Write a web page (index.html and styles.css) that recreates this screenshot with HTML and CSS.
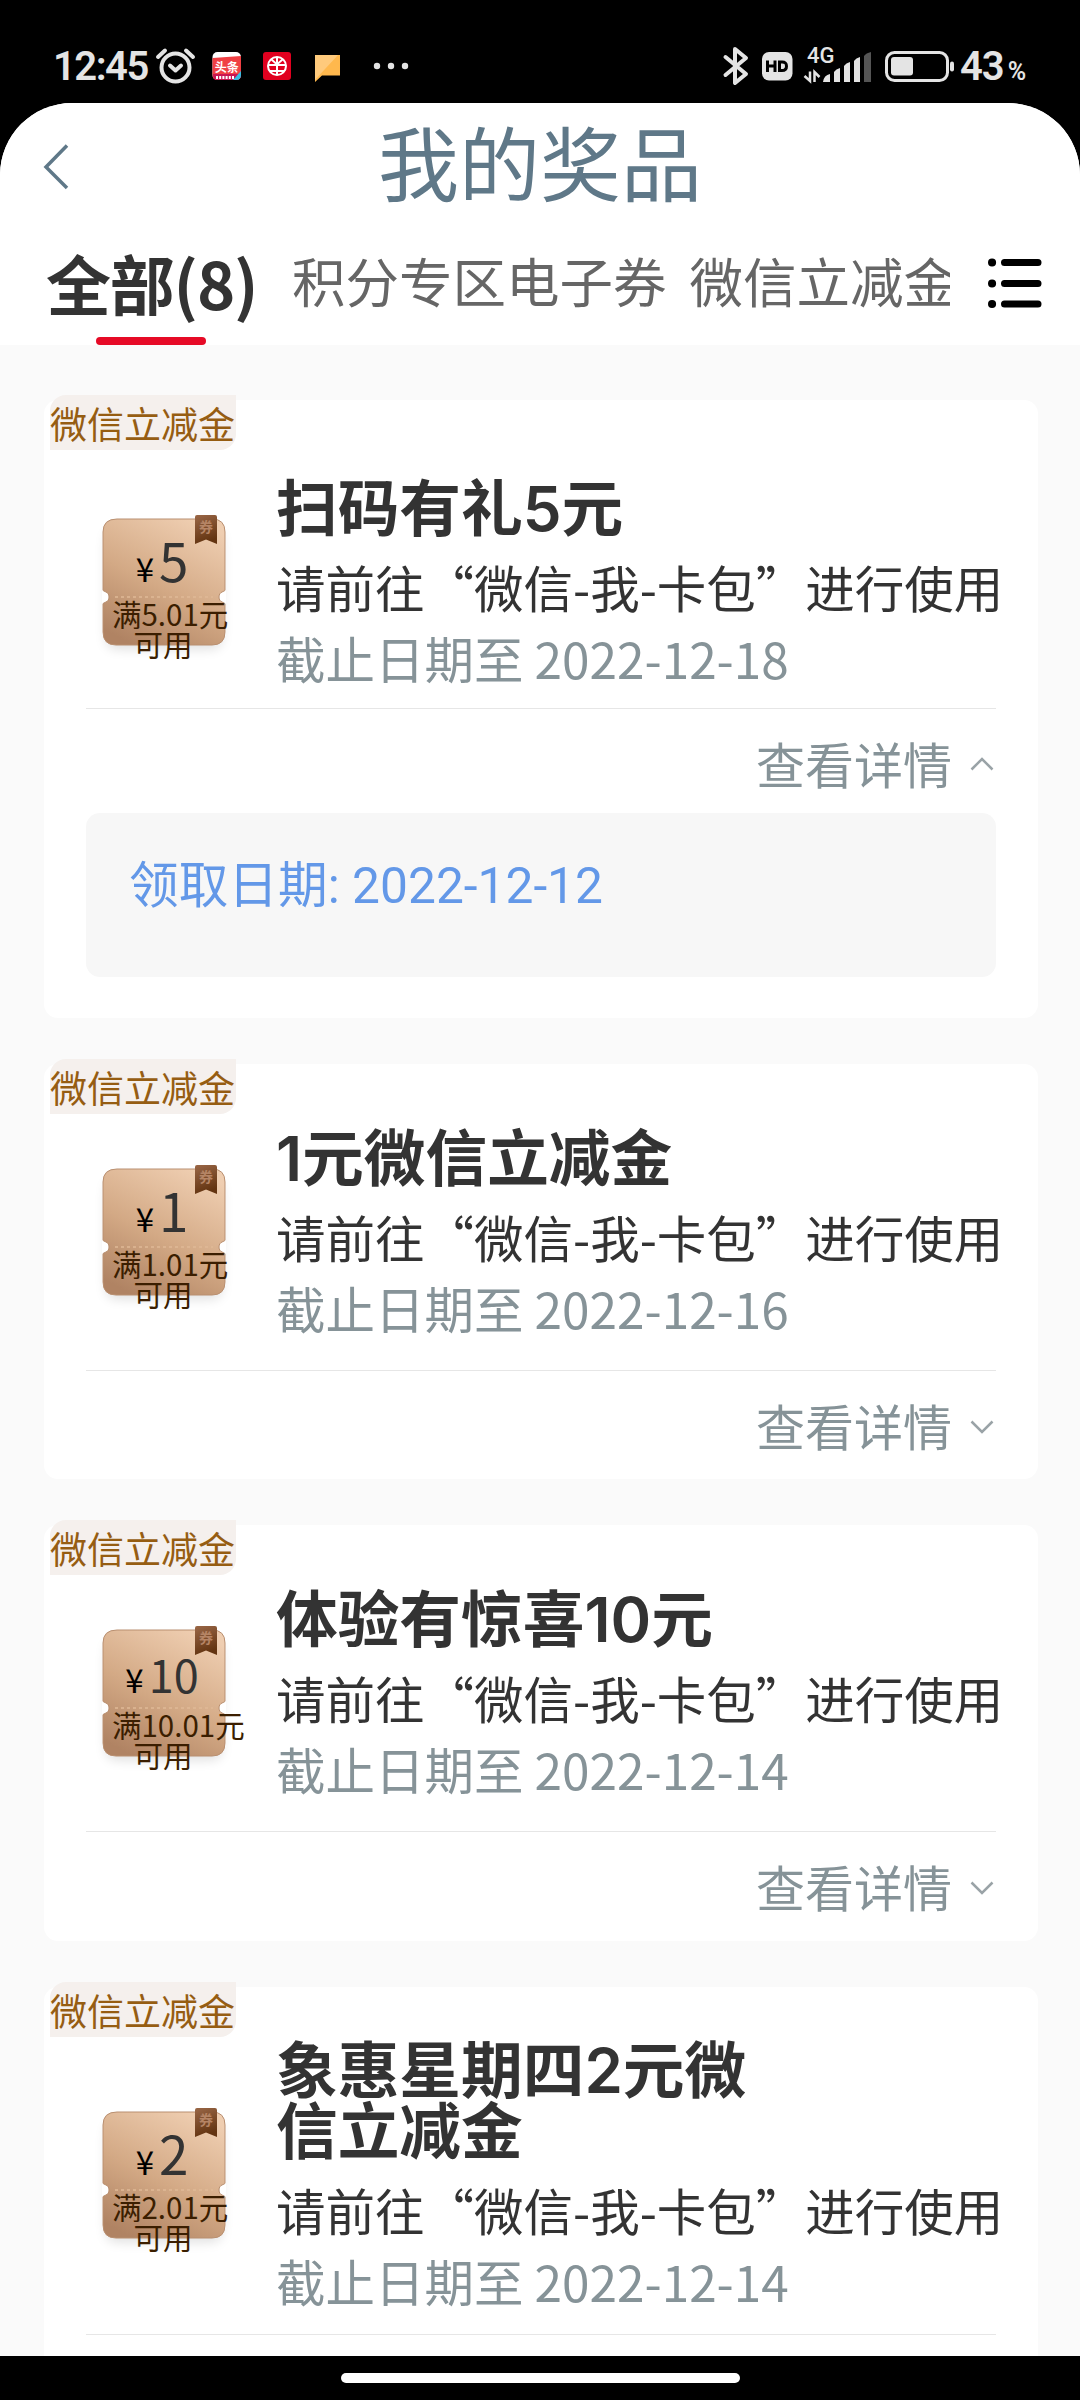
FILE: index.html
```
<!DOCTYPE html>
<html lang="zh-CN">
<head>
<meta charset="utf-8">
<title>我的奖品</title>
<link rel="stylesheet" href="styles.css">
</head>
<body>
<svg class="defs" width="0" height="0">
  <defs>
    <linearGradient id="paper" x1="0.75" y1="0" x2="0.25" y2="1">
      <stop offset="0" stop-color="#efceb1"/><stop offset="0.55" stop-color="#d3a985"/><stop offset="1" stop-color="#b08363"/>
    </linearGradient>
    <linearGradient id="ribbon" x1="0" y1="0" x2="0.3" y2="1">
      <stop offset="0" stop-color="#9a6747"/><stop offset="1" stop-color="#633411"/>
    </linearGradient>
    <symbol id="ticket" viewBox="0 0 140 160">
      <path d="M16 11H111Q124 11 124 24V82C124 84 118 83 118 89S124 94 124 96V124Q124 137 111 137H15Q2 137 2 124V96C2 94 8 95 8 89S2 84 2 82V24Q2 11 16 11Z" fill="url(#paper)" stroke="#b98f70" stroke-width="1"/>
      <path d="M14 89H112" stroke="#dfb997" stroke-width="1.500" stroke-dasharray="3 3"/>
      <path d="M94 9Q94 7 96 7H114Q116 7 116 9V36L105 31.500L94 36Z" fill="url(#ribbon)"/>
      <text x="105" y="24" font-size="14" font-weight="700" text-anchor="middle" fill="#b58465">券</text>
    </symbol>
  </defs>
</svg>
<div class="phone">
  <header class="status">
    <span class="time">12:45</span>
    <svg viewBox="152 0 52 103" width="52" height="103" fill="none" stroke="#e4e4e4" stroke-width="4" stroke-linecap="round" stroke-linejoin="round">
      <circle cx="175.500" cy="67.500" r="14"/><path d="M170 65.500L175.500 70.500L181 65.500M158 57L165 50.500M193 57L186 50.500"/>
    </svg>
    <svg viewBox="204 0 50 103" width="50" height="103">
      <rect x="212.500" y="52" width="28.500" height="28" rx="5" fill="#fff"/>
      <path d="M212.500 58L241 56V75Q241 80 236 80H217.500Q212.500 80 212.500 75Z" fill="#f04044"/>
      <path d="M213 74H241V75Q241 80 236 80H217Q213 80 213 74Z" fill="#c91552"/>
      <path d="M241 71V75Q241 80 236 80H233Z" fill="#35bde0"/>
      <text x="226.800" y="72" font-size="12" font-weight="700" text-anchor="middle" fill="#fff">头条</text>
      <path d="M216 77.500H235" stroke="#fff" stroke-width="3" stroke-dasharray="2 1.200"/>
    </svg>
    <svg viewBox="254 0 50 103" width="50" height="103" fill="none" stroke="#fff" stroke-width="2">
      <rect x="263" y="52" width="28" height="28" rx="3" fill="#e1001f" stroke="none"/>
      <circle cx="277" cy="66" r="9"/><path d="M271 59L277 64.500L283 59M268 65H286M270 71H284M277 58V75"/>
    </svg>
    <svg viewBox="304 0 56 103" width="56" height="103">
      <path d="M315 55H340V75.500H322L315 82Z" fill="#ffb84d"/><path d="M315 55H338L319 75.500L315 80Z" fill="#ffca7c"/>
    </svg>
    <svg viewBox="360 0 60 103" width="60" height="103" fill="#e4e4e4">
      <circle cx="377" cy="66" r="3.200"/><circle cx="391" cy="66" r="3.200"/><circle cx="405" cy="66" r="3.200"/>
    </svg>
    <span class="spacer"></span>
    <svg viewBox="716 0 40 103" width="40" height="103" fill="none" stroke="#e4e4e4" stroke-width="4" stroke-linecap="round" stroke-linejoin="round">
      <path d="M725.500 57L746 74L735 83V49L746 58L725.500 75"/>
    </svg>
    <svg viewBox="756 0 44 103" width="44" height="103">
      <rect x="762" y="52" width="30.500" height="28.500" rx="7" fill="#e4e4e4"/>
      <path d="M767.500 60.500V72M775 60.500V72M767.500 66H775M779.500 62V70.500H782Q786.500 70.500 786.500 66.200T782 62Z" fill="none" stroke="#000" stroke-width="3"/>
    </svg>
    <svg viewBox="800 0 78 103" width="78" height="103" fill="#e4e4e4">
      <text class="net" x="807" y="62.500">4G</text>
      <path d="M804.500 76L810 81V71.500M814.500 82V72L819.500 77" fill="none" stroke="#e4e4e4" stroke-width="2.500"/>
      <path d="M823 82Q824 75 830 74V82ZM834 82V72Q836 69 840 68V82ZM844 82V66Q846 63 850 62V82ZM854 82V61Q856 58 860 57V82Z"/>
      <path d="M864 82V56Q866 53 871 52V82Z" fill="#555"/>
    </svg>
    <svg viewBox="878 0 80 103" width="80" height="103">
      <rect x="886.500" y="52.500" width="61" height="28" rx="8" fill="none" stroke="#e4e4e4" stroke-width="3"/>
      <rect x="891" y="57" width="22" height="18.500" rx="3" fill="#e4e4e4"/><rect x="950" y="61.500" width="4" height="10" rx="2" fill="#e4e4e4"/>
    </svg>
    <span class="percent">43<small>%</small></span>
  </header>

  <main class="app">
    <div class="titlebar">
      <svg class="back" width="30" height="50" viewBox="0 0 30 50" fill="none" stroke="#5f7888" stroke-width="3.500"><path d="M27 4.500L6 26L27 47"/></svg>
      <h1>我的奖品</h1>
    </div>
    <nav class="tabs">
      <div class="strip">
        <span class="tab active">全部(8)</span>
        <span class="tab">积分专区电子券</span>
        <span class="tab">微信立减金</span>
      </div>
      <svg width="56" height="54" viewBox="0 0 56 54" stroke="#000" stroke-width="7" stroke-linecap="round"><path d="M4 6.500h.1M4 27.500h.1M4 48h.1" stroke-width="8"/><path d="M16.500 6.500H50M16.500 27.500H50M16.500 48H50"/></svg>
    </nav>

    <section class="list">
      <article class="card open">
        <span class="tag">微信立减金</span>
        <div class="row">
          <div class="coupon"><svg class="ticket" width="140" height="160"><use href="#ticket"/></svg>
            <div class="amount"><i>¥</i><b>5</b></div><div class="rule">满5.01元<br>可用</div></div>
          <div class="info"><h2>扫码有礼5元</h2><p>请前往“微信-我-卡包”进行使用</p><time>截止日期至 2022-12-18</time></div>
        </div>
        <div class="more">查看详情<svg width="24" height="14" viewBox="0 0 24 14"><path d="M1.500 12.500L12 2L22.500 12.500"/></svg></div>
        <div class="detail">领取日期: 2022-12-12</div>
      </article>

      <article class="card">
        <span class="tag">微信立减金</span>
        <div class="row">
          <div class="coupon"><svg class="ticket" width="140" height="160"><use href="#ticket"/></svg>
            <div class="amount"><i>¥</i><b>1</b></div><div class="rule">满1.01元<br>可用</div></div>
          <div class="info"><h2>1元微信立减金</h2><p>请前往“微信-我-卡包”进行使用</p><time>截止日期至 2022-12-16</time></div>
        </div>
        <div class="more">查看详情<svg width="24" height="14" viewBox="0 0 24 14"><path d="M1.500 1.500L12 12L22.500 1.500"/></svg></div>
      </article>

      <article class="card">
        <span class="tag">微信立减金</span>
        <div class="row">
          <div class="coupon"><svg class="ticket" width="140" height="160"><use href="#ticket"/></svg>
            <div class="amount two"><i>¥</i><b>10</b></div><div class="rule">满10.01元<br>可用</div></div>
          <div class="info"><h2>体验有惊喜10元</h2><p>请前往“微信-我-卡包”进行使用</p><time>截止日期至 2022-12-14</time></div>
        </div>
        <div class="more">查看详情<svg width="24" height="14" viewBox="0 0 24 14"><path d="M1.500 1.500L12 12L22.500 1.500"/></svg></div>
      </article>

      <article class="card tall">
        <span class="tag">微信立减金</span>
        <div class="row">
          <div class="coupon"><svg class="ticket" width="140" height="160"><use href="#ticket"/></svg>
            <div class="amount"><i>¥</i><b>2</b></div><div class="rule">满2.01元<br>可用</div></div>
          <div class="info"><h2>象惠星期四2元微<br>信立减金</h2><p>请前往“微信-我-卡包”进行使用</p><time>截止日期至 2022-12-14</time></div>
        </div>
      </article>
    </section>
  </main>
  <footer class="home"><span></span></footer>
</div>
</body>
</html>
```
FILE: styles.css
```
* { box-sizing: border-box; }
body { margin: 0; background: #000; font-family: "Noto Sans CJK SC", sans-serif; }
h1, h2, p { margin: 0; }
.defs { position: absolute; }
.phone { display: flex; flex-direction: column; width: 1080px; height: 2400px; overflow: hidden; background: #000; }

.status { display: flex; flex: none; height: 103px; padding-left: 53px; color: #e4e4e4; font-family: Roboto, sans-serif; font-weight: 600; }
.status svg { flex: none; font-family: "Noto Sans CJK SC", sans-serif; }
.status .net { font: 500 22px Roboto, sans-serif; }
.time { width: 99px; font-size: 40px; line-height: 133px; letter-spacing: -1.5px; white-space: nowrap; }
.spacer { flex: 1; }
.percent { width: 122px; padding-left: 2px; font-size: 40px; line-height: 133px; letter-spacing: -1px; white-space: nowrap; }
.percent small { margin-left: 4px; font-size: 25px; }

.app { display: flex; flex-direction: column; flex: 1; min-height: 0; overflow: hidden; border-radius: 72px 72px 0 0; background: #fafafa; }
.titlebar { display: grid; grid-template-columns: 75px 1fr 75px; flex: none; align-items: center; height: 125px; background: #fff; }
.back { margin-left: 40px; }
h1 { margin-top: -11px; color: #5f7888; font-size: 81px; font-weight: 400; line-height: 116px; text-align: center; }
.tabs { display: flex; flex: none; height: 117px; padding: 0 36px 0 46px; background: #fff; }
.tabs > svg { margin: 28px 0 0 38px; }
.strip { display: flex; flex: 1; min-width: 0; overflow: hidden; white-space: nowrap; }
.tab { flex: none; margin-left: 29px; color: #666; font-size: 53.500px; line-height: 104px; }
.tab + .tab + .tab { margin-left: 23px; }
.tab.active { display: flex; flex-direction: column; align-items: flex-start; width: 217px; margin: 0; color: #333; font-size: 65px; font-weight: 700; line-height: 109px; letter-spacing: -1.200px; }
.tab.active::after { width: 110px; height: 8px; margin-left: 50px; border-radius: 4px; background: #e60a26; content: ""; }

.list { display: flex; flex-direction: column; gap: 46px; padding: 55px 42px 0 44px; }
.card { position: relative; flex: none; height: 415px; padding: 58px 42px 0; border-radius: 14px; background: #fff; }
.card:nth-child(3) { height: 416px; }
.tag { position: absolute; top: -5px; left: 6px; height: 55px; width: 186px; border-radius: 16px 0 16px 0; background: #f5f0ed; color: #965d12; font-size: 37px; line-height: 57px; white-space: nowrap; }
.row { display: flex; align-items: center; height: 249px; padding: 0 0 25px 16px; border-bottom: 1px solid #e6e6e6; }
.coupon { position: relative; flex: none; width: 124px; height: 127px; margin: -5px 50px 0 0; border-radius: 14px; box-shadow: 0 8px 12px -4px rgba(0,0,0,.13); }
.ticket { position: absolute; left: -1px; top: -10px; }
.amount { position: relative; display: flex; align-items: baseline; justify-content: center; height: 80px; padding: 0 4px 0 0; line-height: 83px; }
.amount i { margin-right: 5px; color: #000; font-size: 33px; font-style: normal; }
.amount b { color: #333; font-size: 53px; font-weight: 400; }
.amount.two { line-height: 89px; }
.amount.two b { font-size: 45px; }
.rule { position: relative; width: 102px; margin-left: 10px; color: #3b1e00; font-size: 29.500px; line-height: 30px; text-align: center; white-space: nowrap; }
.info { display: flex; flex-direction: column; white-space: nowrap; }
h2 { margin: 3px 0 12px; color: #333; font-family: Inter, "Noto Sans CJK SC", sans-serif; font-size: 61.700px; font-weight: 600; line-height: 61px; }
.info p { color: #333; font-size: 49.500px; line-height: 71px; }
time { color: #869398; font-size: 49.500px; line-height: 71px; }
.more { display: flex; align-items: center; justify-content: flex-end; gap: 18px; height: 104px; padding: 2px 2px 0 0; color: #869398; font-size: 49px; }
.more svg { margin-top: 5px; fill: none; stroke: #9aa3a7; stroke-width: 2.500; }
.open { height: 618px; padding-top: 72px; }
.open .row { height: 237px; padding-bottom: 12px; }
.open .more { padding-top: 3px; }
.open .more svg { margin-top: 2px; }
.detail { height: 164px; padding-left: 43px; border-radius: 14px; background: #f7f7f7; color: #6398e8; font-family: Roboto, "Noto Sans CJK SC", sans-serif; font-size: 49.700px; line-height: 146px; }
.tall { padding-top: 47px; }
.tall .row { height: 301px; padding-bottom: 15px; }
.home { display: flex; flex: none; align-items: flex-start; justify-content: center; height: 44px; padding-top: 17px; background: #000; }
.home span { width: 399px; height: 10px; border-radius: 5px; background: #fff; }
```
